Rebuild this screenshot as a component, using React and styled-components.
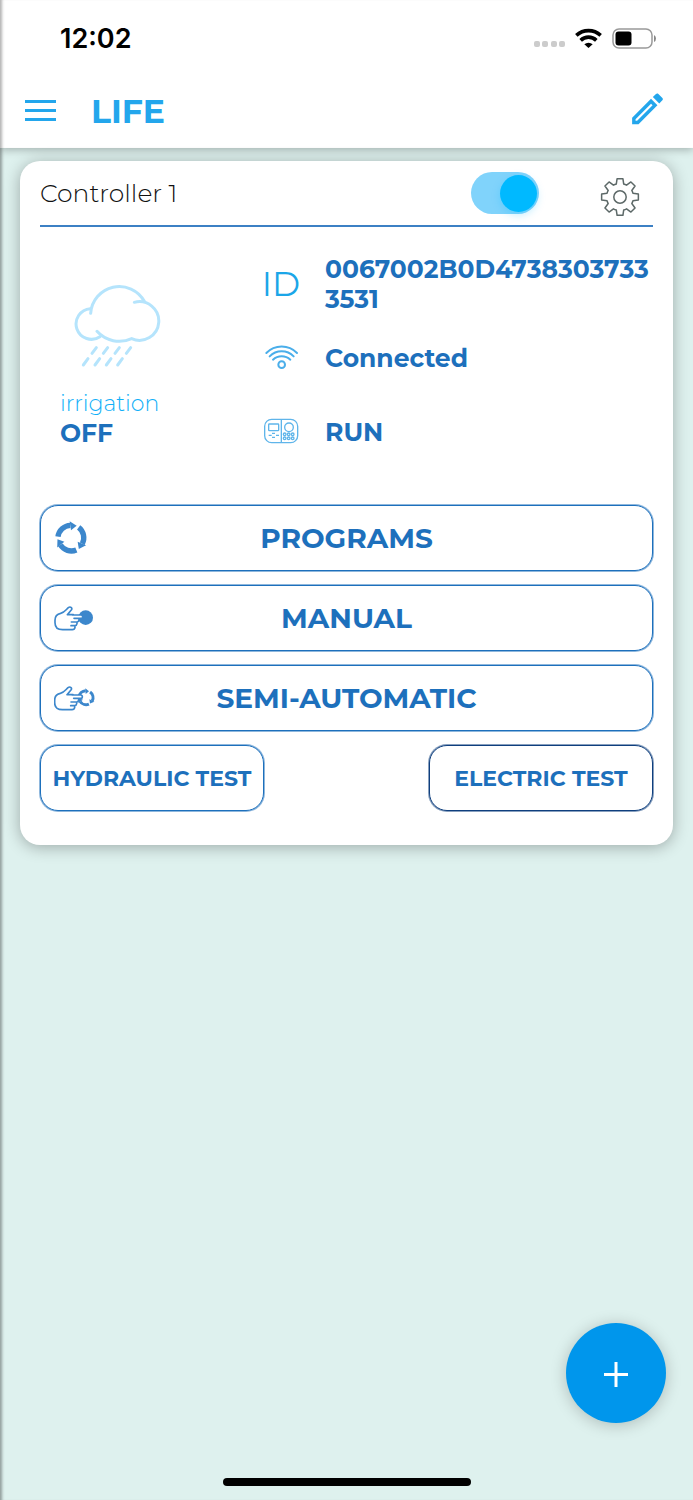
import styled, { createGlobalStyle } from 'styled-components'

const GlobalStyle = createGlobalStyle`
  * {
    box-sizing: border-box;
  }
  body {
    margin: 0;
    background: #def1ee;
    font-family: Montserrat, Inter, 'Open Sans', sans-serif;
    color: #1d70bc;
  }
  button {
    font-family: inherit;
    cursor: pointer;
  }
  svg {
    display: block;
    flex: none;
  }
`

const Page = styled.div`
  min-height: 100vh;
  display: flex;
  flex-direction: column;
  box-shadow: inset 4px 0 3px -2px rgba(0, 0, 0, 0.35);
`

const TopBar = styled.header`
  background: #fff;
  box-shadow: inset 4px 0 3px -2px rgba(0, 0, 0, 0.3), 0 2px 8px rgba(0, 0, 0, 0.26);
`

const StatusBar = styled.div`
  height: 76px;
  padding: 0 36px 0 60px;
  display: flex;
  align-items: center;
  justify-content: space-between;
  color: #000;
  font-family: Inter, sans-serif;
  font-size: 27px;
  font-weight: 600;
`

const StatusIcons = styled.div`
  display: flex;
  align-items: center;
  gap: 10px;
`

const NavBar = styled.div`
  height: 72px;
  padding: 0 25px 3px 24px;
  display: flex;
  align-items: center;
`

const Title = styled.h1`
  flex: 1;
  margin: 0 0 0 35px;
  font-size: 33px;
  line-height: 40px;
  font-weight: 700;
  color: #23a6ec;
`

const IconButton = styled.button`
  padding: 0;
  border: 0;
  background: none;
`

const SettingsButton = styled(IconButton)`
  padding-top: 8px;
`

const Main = styled.main`
  flex: 1;
  padding: 13px 20px 0;
`

const Card = styled.section`
  padding: 0 20px 34px;
  background: #fff;
  border-radius: 20px;
  box-shadow: 0 2px 16px rgba(0, 0, 0, 0.3);
`

const CardHead = styled.div`
  height: 66px;
  padding-right: 13px;
  display: flex;
  align-items: center;
  border-bottom: 2px solid #3c80c4;
`

const CardTitle = styled.label`
  flex: 1;
  color: #111;
  font-size: 25px;
  line-height: 30px;
  font-weight: 300;
`

const Toggle = styled.input`
  appearance: none;
  width: 68px;
  height: 42px;
  margin: 0 61px 0 0;
  padding: 2px;
  border-radius: 21px;
  background: #80d3fb;
  display: flex;
  align-items: center;
  cursor: pointer;
  &::before {
    content: '';
    width: 37px;
    height: 37px;
    border-radius: 50%;
    background: #00b9ff;
    box-shadow: 0 3px 8px rgba(0, 185, 255, 0.25);
  }
  &:checked {
    justify-content: flex-end;
  }
`

const Info = styled.div`
  display: flex;
  padding: 27px 0 43px;
`

const Weather = styled.div`
  flex: none;
  width: 202px;
  padding: 30px 0 0 20px;
  & svg {
    margin: 0 0 22px 13px;
  }
`

const WeatherLabel = styled.div`
  color: #12b0f8;
  font-size: 22px;
  line-height: 28px;
  font-weight: 300;
`

const WeatherState = styled.div`
  font-size: 25px;
  line-height: 30px;
  font-weight: 700;
`

const Details = styled.dl`
  flex: 1;
  min-width: 0;
  margin: 0;
  display: grid;
  grid-template-columns: 78px 1fr;
  grid-template-rows: 60px 88px 60px;
  align-items: center;
  padding-left: 5px;
`

const DetailName = styled.dt`
  width: 68px;
  display: flex;
  justify-content: center;
  color: #1ba6e8;
  font-size: 34px;
  line-height: 40px;
  font-weight: 400;
`

const DetailValue = styled.dd`
  margin: 0;
  font-size: 25px;
  line-height: 30px;
  font-weight: 700;
  word-break: break-all;
`

const Actions = styled.div`
  display: grid;
  gap: 14px;
`

const OutlineButton = styled.button`
  height: 66px;
  border: 1px solid ${({ $dark }) => ($dark ? '#0f3f7e' : '#1d70bc')};
  border-radius: 18px;
  box-shadow: 0 0 0 1px ${({ $dark }) => ($dark ? 'rgba(15, 63, 126, 0.5)' : 'rgba(29, 112, 188, 0.5)')};
  background: #fff;
  color: #1d70bc;
  font-weight: 700;
`

const ActionButton = styled(OutlineButton)`
  padding: 0 13px;
  display: grid;
  grid-template-columns: 42px 1fr 42px;
  align-items: center;
  font-size: 28px;
`

const TestRow = styled.div`
  display: flex;
  justify-content: space-between;
`

const TestButton = styled(OutlineButton)`
  width: 224px;
  padding: 0;
  font-size: 22px;
`

const Footer = styled.footer`
  display: flex;
  flex-direction: column;
  padding: 0 27px 14px;
`

const AddButton = styled.button`
  align-self: flex-end;
  width: 100px;
  height: 100px;
  margin-bottom: 55px;
  padding: 3px 0 0;
  display: flex;
  align-items: center;
  justify-content: center;
  border: 0;
  border-radius: 50%;
  background: #0096ec;
  box-shadow: 0 2px 16px rgba(0, 0, 0, 0.22);
`

const HomeIndicator = styled.div`
  align-self: center;
  width: 248px;
  height: 8px;
  border-radius: 4px;
  background: #000;
`

const SignalIcon = () => (
  <svg width="32" height="32" viewBox="0 0 32 32" fill="#ccc">
    {[1, 9, 18, 26].map((x) => (
      <rect key={x} x={x} y="19" width="6" height="6" rx="2" />
    ))}
  </svg>
)

const StatusWifiIcon = () => (
  <svg width="27" height="20" viewBox="0 0 81 60">
    <g fill="none" stroke="#000" strokeWidth="11">
      <path d="M4 22A54 54 0 0 1 77 22" />
      <path d="M17 37A34 34 0 0 1 64 37" />
    </g>
    <path d="M28 49A18 18 0 0 1 53 49L40.500 60Z" />
  </svg>
)

const BatteryIcon = () => (
  <svg width="45" height="21" viewBox="0 0 45 21">
    <rect x="1" y="1" width="39" height="19" rx="6" fill="none" stroke="#999" strokeWidth="1.500" />
    <rect x="3.500" y="3.500" width="16" height="14" rx="3" />
    <path d="M42 7Q44 8 44 10.500T42 14Z" fill="#888" />
  </svg>
)

const MenuIcon = () => (
  <svg width="32" height="22" viewBox="0 0 32 22" fill="#23a6ec">
    <path d="M1 0H32V3H1ZM1 9H32V12H1ZM1 18H32V21H1Z" />
  </svg>
)

const PencilIcon = () => (
  <svg width="41" height="41" viewBox="0 1 24 24" fill="#23a6ec">
    <path d="M14.060 9.020l.92.92L5.920 19H5v-.92l9.060-9.060M17.660 3c-.25 0-.51.1-.7.29l-1.830 1.830 3.750 3.750 1.830-1.830c.39-.39.39-1.020 0-1.410l-2.340-2.340c-.2-.2-.45-.29-.71-.29zm-3.600 3.190L3 17.250V21h3.750L17.810 9.940l-3.750-3.750z" />
  </svg>
)

const polar = (r, deg) => {
  const a = (deg * Math.PI) / 180
  return `${20 + r * Math.sin(a)} ${20 - r * Math.cos(a)}`
}

// eight teeth, joined by short arcs on the body circle
const gearPath = [0, 45, 90, 135, 180, 225, 270, 315]
  .map((t, i) => {
    const start = i === 0 ? `M${polar(13.5, t - 16)}` : `A14 14 0 0 1 ${polar(13.5, t - 16)}`
    return `${start}L${polar(18.6, t - 9)}L${polar(18.6, t + 9)}L${polar(13.5, t + 16)}`
  })
  .join('') + `A14 14 0 0 1 ${polar(13.5, -16)}Z`

const GearIcon = () => (
  <svg width="40" height="40" viewBox="0 0 40 40" fill="none" stroke="#5d6968" strokeWidth="1.500" strokeLinejoin="round">
    <path d={gearPath} />
    <circle cx="20" cy="20" r="6.200" />
  </svg>
)

const RainIcon = () => (
  <svg width="88" height="84" viewBox="98 44 264 252" fill="none" stroke="#b5e4fc" strokeWidth="9" strokeLinecap="round">
    <path d="M179 202A46 46 0 1 1 150 118" />
    <path d="M151 132A86 86 0 0 1 312 96" />
    <path d="M282 99A58 58 0 1 1 274 208A90 90 0 0 1 170 186" />
    {[168, 202, 237, 271].map((x) => (
      <path key={x} d={`M${x} 235L${x - 13} 252`} />
    ))}
    {[143, 178, 212, 246].map((x) => (
      <path key={x} d={`M${x} 268L${x - 14} 287`} />
    ))}
  </svg>
)

const WifiIcon = () => (
  <svg width="36" height="26" viewBox="70 314 108 78" fill="none" stroke="#4aaeea" strokeWidth="6" strokeLinecap="round">
    <path d="M80 338A64 64 0 0 1 172 338" />
    <path d="M90 348A50 50 0 0 1 162 348" />
    <path d="M100 358A38 38 0 0 1 152 358" />
    <circle cx="126" cy="373" r="10" />
  </svg>
)

const PanelIcon = () => (
  <svg width="36" height="26" viewBox="69 534 108 78" fill="none" stroke="#5fb5ea" strokeWidth="4" overflow="visible">
    <rect x="74" y="535" width="99" height="70" rx="21" />
    <path d="M124 536V605" />
    <rect x="86" y="549" width="30" height="20" rx="2" />
    <circle cx="147" cy="559" r="13" />
    {[134, 146, 158].map((x) => (
      <g key={x}>
        <circle cx={x} cy="580" r="4" />
        <circle cx={x} cy="592" r="4" />
      </g>
    ))}
    <path d="M86 583H95M96 577H105M108 583H117M96 589H105" />
  </svg>
)

const CycleIcon = () => (
  <svg width="34" height="34" viewBox="71 79 102 102" fill="#3c87cc">
    {[0, 120, 240].map((r) => (
      <g key={r} transform={`rotate(${r} 122 130)`}>
        <path d="M83 126A39 39 0 0 1 120 92" fill="none" stroke="#3c87cc" strokeWidth="16" />
        <path d="M118 80L139 93L122 107Z" />
      </g>
    ))}
  </svg>
)

const Hand = () => (
  <path
    d="M127 361H153Q158 361 158 366T153 371H132M147 371V376Q146 382 141 382H124M141 382V387Q140 393 135 393H123M135 393V398Q134 405 127 405H98Q75 405 75 384V377Q75 359 92 356C103 354 108 345 115 339Q120 335 124 339T122 348L112 360H130"
    fill="#fff"
    stroke="#3c87cc"
    strokeWidth="5"
    strokeLinejoin="round"
    strokeLinecap="round"
  />
)

const ManualIcon = () => (
  <svg width="40" height="28" viewBox="72 328 120 84">
    <circle cx="167" cy="369" r="22" fill="#3c87cc" />
    <Hand />
  </svg>
)

const SemiAutoIcon = () => (
  <svg width="42" height="28" viewBox="73 328 126 84">
    {[0, 120, 240].map((r) => (
      <g key={r} transform={`rotate(${r} 169 369)`}>
        <path d="M148 367A21 21 0 0 1 168 348" fill="none" stroke="#3c87cc" strokeWidth="9" />
        <path d="M167 341L178 350L168 358Z" fill="#3c87cc" />
      </g>
    ))}
    <Hand />
  </svg>
)

const PlusIcon = () => (
  <svg width="24" height="25" viewBox="0 0 24 25" fill="#fff">
    <path d="M10.500 0H13.500V11H24V14H13.500V25H10.500V14H0V11H10.500Z" />
  </svg>
)

const actions = [
  { label: 'PROGRAMS', icon: <CycleIcon /> },
  { label: 'MANUAL', icon: <ManualIcon /> },
  { label: 'SEMI-AUTOMATIC', icon: <SemiAutoIcon /> },
]

const details = [
  { key: 'id', name: 'ID', value: '0067002B0D47383037333531' },
  { key: 'link', name: <WifiIcon />, value: 'Connected' },
  { key: 'mode', name: <PanelIcon />, value: 'RUN' },
]

const App = () => {
  return (
    <Page>
      <GlobalStyle />
      <TopBar>
        <StatusBar>
          <span>12:02</span>
          <StatusIcons>
            <SignalIcon />
            <StatusWifiIcon />
            <BatteryIcon />
          </StatusIcons>
        </StatusBar>
        <NavBar>
          <IconButton aria-label="Menu"><MenuIcon /></IconButton>
          <Title>LIFE</Title>
          <IconButton aria-label="Edit"><PencilIcon /></IconButton>
        </NavBar>
      </TopBar>
      <Main>
        <Card>
          <CardHead>
            <CardTitle htmlFor="controller">Controller 1</CardTitle>
            <Toggle id="controller" type="checkbox" defaultChecked />
            <SettingsButton aria-label="Settings"><GearIcon /></SettingsButton>
          </CardHead>
          <Info>
            <Weather>
              <RainIcon />
              <WeatherLabel>irrigation</WeatherLabel>
              <WeatherState>OFF</WeatherState>
            </Weather>
            <Details>
              {details.map(({ key, name, value }) => [
                <DetailName key={key}>{name}</DetailName>,
                <DetailValue key={`${key}-value`}>{value}</DetailValue>,
              ])}
            </Details>
          </Info>
          <Actions>
            {actions.map(({ label, icon }) => (
              <ActionButton key={label}>
                {icon}
                <span>{label}</span>
              </ActionButton>
            ))}
            <TestRow>
              <TestButton>HYDRAULIC TEST</TestButton>
              <TestButton $dark>ELECTRIC TEST</TestButton>
            </TestRow>
          </Actions>
        </Card>
      </Main>
      <Footer>
        <AddButton aria-label="Add controller"><PlusIcon /></AddButton>
        <HomeIndicator />
      </Footer>
    </Page>
  )
}

export default App
